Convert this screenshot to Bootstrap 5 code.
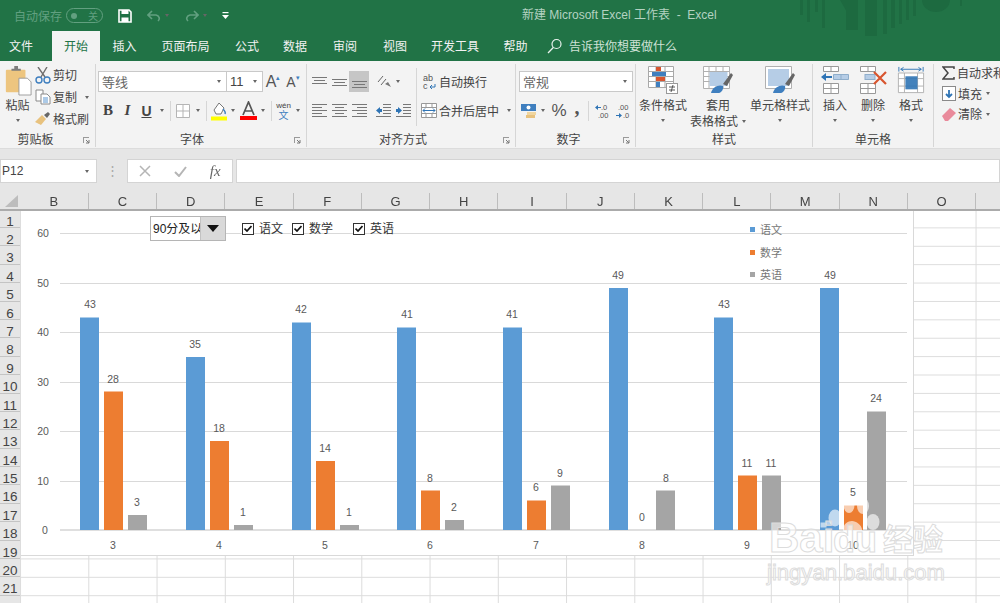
<!DOCTYPE html>
<html lang="zh">
<head>
<meta charset="utf-8">
<title>Excel</title>
<link href="https://cdn.jsdelivr.net/npm/bootstrap@5.3.0/dist/css/bootstrap.min.css" rel="stylesheet">
<style>
html,body{width:1000px;height:603px;overflow:hidden;background:#e6e6e6}
body{font-family:"Noto Sans CJK SC","Liberation Sans",sans-serif;font-size:12px;color:#444;line-height:1}
svg{display:block;flex:none}
.xl-app{width:1000px;height:603px;overflow:hidden;filter:blur(.3px)}
.xl-title{height:31px;background:#217346}
.xl-deco{position:absolute;left:800px;top:0}
.xl-auto{margin-left:14px;width:52px;color:#62a080}
.xl-toggle{width:37px;height:15px;border:1px solid #62a080;border-radius:8px;color:#62a080;font-size:10px;padding:0 4px}
.xl-dot{width:6px;height:6px;border-radius:50%;background:#62a080}
.xl-doc{position:absolute;left:522px;top:8px;color:#b4d2c1;font-family:"Liberation Sans","Noto Sans CJK SC",sans-serif;font-size:12px;line-height:14px}
.xl-qat{margin-left:15px}
.xl-undo{border-top-color:#62a080}
.xl-tabs{height:30px;background:#217346;color:#f2f2f2}
.xl-tab{height:30px;line-height:29px;text-align:center;flex:none}
.xl-tab.is-on{background:#f3f3f3;color:#217346;margin-left:10px}
.xl-t42{width:42px}.xl-t46{width:46px}.xl-t47{width:47px}.xl-t48{width:48px}.xl-t49{width:49px}.xl-t50{width:50px}.xl-t54{width:54px}.xl-t73{width:73px}.xl-t74{width:74px}
.xl-tell{color:#cfe2d7;margin-left:7px}
.xl-ribbon{height:87px;background:#f3f3f3;padding-top:3px}
.xl-grp{height:83px;border-right:1px solid #d6d6d6;position:relative;flex:none}
.xl-body{padding-top:7px}
.xl-cap{position:absolute;left:0;right:0;bottom:0;height:16px;line-height:16px;text-align:center;color:#444}
.xl-cap1{padding-right:24px}.xl-cap2{padding-right:18px}.xl-cap3{padding-right:16px}.xl-cap4{padding-right:14px}
.xl-launch{position:absolute;right:5px;bottom:3px}
.xl-rw{height:21px}
.xl-rw+.xl-rw{margin-top:8px}
.xl-cell{height:21px;flex:none;display:flex;align-items:center;justify-content:center}
.xl-cell.is-on{background:#c6c6c6}
.xl-sep{width:1px;height:20px;background:#d6d6d6;margin:0 2px}
.xl-vsep{display:block;width:1px;height:58px;background:#d6d6d6;margin-top:-3px}
.xl-caret{width:0;height:0;border:2.5px solid transparent;border-top:3px solid #666;border-bottom:0;display:block;flex:none}
.xl-drop{height:21px;background:#fff;border:1px solid #c9c9c9;flex:none;padding:0 5px 0 3px;color:#666;font-size:13px}
.xl-d129{width:129px}.xl-d37{width:37px;margin-left:-1px}.xl-d114{width:114px}
.xl-num{font-family:"Liberation Sans",sans-serif;color:#444}
.xl-g1{width:96px}.xl-g2{width:211px}.xl-g3{width:209px}.xl-g4{width:120px}.xl-g5{width:177px}.xl-g6{width:121px}.xl-g7{width:66px;border-right:0;overflow:hidden}
.xl-smallrow{height:22px}
.xl-editrows{margin-top:-1px}
.xl-editrow{height:20.500px;white-space:nowrap}
.xl-stack{width:35px}
.xl-paste{margin-top:2px;height:30px}
.xl-pastetxt{margin-top:3px}
.xl-pastecaret{margin-top:8px}
.xl-ml2{margin-left:2px}
.xl-big{flex:none;text-align:center}
.xl-bigrow{padding-top:2px}
.xl-bigtxt{line-height:16px;margin-top:3px;white-space:nowrap}
.xl-bigtxt2{margin-top:0}
.xl-bigic{height:28px;display:flex;justify-content:center}
.xl-bigcaret{margin:6px auto 0}
.xl-w4{width:4px}.xl-w6{width:6px}.xl-w9{width:9px}.xl-w10{width:10px}.xl-w11{width:11px}.xl-w14{width:14px}.xl-w19{width:19px}.xl-w20{width:20px}.xl-w22{width:22px}.xl-w38{width:38px}.xl-w54{width:54px}.xl-w56{width:56px}.xl-w60{width:60px}
.xl-pl2{padding-left:2px}.xl-pl3{padding-left:3px}
.xl-left{width:107px}
.xl-bold{font-family:"Liberation Serif",serif;font-size:15px;color:#444;font-weight:700}
.xl-ital{font-family:"Liberation Serif",serif;font-style:italic;font-size:15px;font-weight:700}
.xl-under{font-family:"Liberation Sans",sans-serif;font-size:14px;text-decoration:underline;font-weight:700}
.xl-bigA{font-family:"Liberation Sans",sans-serif;font-size:16px;color:#555}
.xl-smA{font-family:"Liberation Sans",sans-serif;font-size:14px;color:#555}
.xl-bigA sup,.xl-smA sup{color:#3f7fbf;font-size:7px}
.xl-wen{font-size:8px;font-family:"Liberation Sans",sans-serif}
.xl-wenz{font-size:10px;color:#3f7fbf}
.xl-pct{font-family:"Liberation Sans",sans-serif;font-size:17px;color:#555}
.xl-comma{font-family:"Liberation Serif",serif;font-size:20px;font-weight:700;color:#555;line-height:10px;padding-bottom:7px}
.xl-gap{height:10px;background:#e6e6e6;border-top:1px solid #dcdcdc}
.xl-fbar{height:25px;background:#e6e6e6;padding-top:1px}
.xl-name{width:97px;height:24px;background:#fff;border:1px solid #d4d4d4;padding:0 7px 0 1px;font-family:"Liberation Sans",sans-serif;font-size:12px;color:#444}
.xl-dots{width:30px;text-align:center;color:#a8a8a8;font-size:13px;padding-top:4px}
.xl-fx{width:106px;height:24px;background:#fff;border:1px solid #d4d4d4;color:#b5b5b5}
.xl-fxi{font-family:"Liberation Serif",serif;font-style:italic;color:#666;font-size:15px}
.xl-input{height:24px;background:#fff;border:1px solid #d4d4d4;margin-left:3px;flex:1}
.xl-colbar{height:26px;background:#e6e6e6;padding-top:10px}
.xl-corner{width:19.700px;height:16px;flex:none;position:relative}
.xl-col{width:68.250px;height:16px;flex:none;text-align:center;font-family:"Liberation Sans",sans-serif;font-size:13px;line-height:18px;color:#444;border-left:1px solid #bdbdbd}
.xl-col0{border-left:0}
.xl-line{height:2px;background:#ababab}
.xl-sheet{position:relative;height:392px;background:#fff;overflow:hidden}
.xl-rows{width:20px;background:#e6e6e6;flex:none;margin-top:-1.400px;height:394px}
.xl-rownum{height:18.400px;font-family:"Liberation Sans",sans-serif;font-size:13.500px;line-height:24px;text-align:center;border-bottom:1px solid #c4c4c4;color:#444}
.xl-grid{flex:1;background-color:#fff;background-image:linear-gradient(to right,#dcdcdc 1px,transparent 1px),linear-gradient(to bottom,#dcdcdc 1px,transparent 1px);background-size:68.250px 100%,100% 18.400px;background-position:68.300px 0,0 16.400px}
.xl-chart{position:absolute;left:21px;top:-1px;width:893px;height:346px;background:#fff;border:1px solid #d9d9d9;border-left:0}
.xl-ctl{position:absolute;left:129px;top:5px;color:#333}
.xl-combo{width:76px;height:25px;border:1px solid #b5b5b5;background:#fff;font-size:12px;color:#222}
.xl-combotxt{width:50px;overflow:hidden;white-space:nowrap;padding-left:2px;font-family:"Liberation Sans","Noto Sans CJK SC",sans-serif}
.xl-combobtn{width:25px;height:23px;background:#d9d9d9;border-left:1px solid #c2c2c2}
.xl-tri{width:0;height:0;border:6px solid transparent;border-top:7px solid #111;border-bottom:0}
.xl-box{width:12px;height:12px;border:1px solid #333;flex:none;background:#fff}
.xl-chk{color:#333;height:25px;flex:none}
.xl-chk1{margin-left:16px;width:50px}.xl-chk2{width:61px}.xl-chk3{width:50px}
.xl-chktxt{margin-left:5px;line-height:1;white-space:nowrap;padding-bottom:2px}
.xl-wm{position:absolute;left:740px;top:279px;pointer-events:none}
</style>
</head>
<body>
<div class="xl-app d-flex flex-column position-relative">
  <!-- title bar -->
  <div class="xl-title d-flex align-items-center position-relative flex-shrink-0">
    <svg class="xl-deco" width="200" height="36" viewBox="0 0 200 36" fill="#1d6a40"><rect x="0" y="0" width="3" height="15"/><rect x="7" y="0" width="3" height="22"/><rect x="15" y="0" width="3" height="12"/><rect x="22" y="0" width="3" height="28"/><path d="M30 0h10l8 14v-14h0z"/><rect x="46" y="0" width="12" height="30"/><rect x="65" y="0" width="12" height="36"/><rect x="83" y="0" width="4" height="34"/><rect x="91" y="0" width="4" height="28"/><rect x="99" y="0" width="3" height="24"/><rect x="106" y="0" width="3" height="20"/><rect x="113" y="0" width="3" height="16"/><path d="M122 0h28a14 12 0 0 1-28 0z"/><rect x="160" y="0" width="2" height="6"/></svg>
    <span class="xl-auto">自动保存</span>
    <span class="xl-toggle d-flex align-items-center justify-content-between flex-shrink-0"><i class="xl-dot"></i><span>关</span></span>
    <svg class="xl-qat" width="14" height="14" viewBox="0 0 14 14"><path d="M1 1h10l2 2v10H1z" fill="none" stroke="#fff" stroke-width="1.600"/><rect x="3.500" y="1" width="7" height="4" fill="#fff"/><rect x="3.500" y="8.500" width="7" height="4.500" fill="#fff"/></svg>
    <svg class="xl-qat" width="14" height="12" viewBox="0 0 14 12"><path d="M5 1 1 5l4 4M1 5h8a4 3.500 0 0 1 2 6" fill="none" stroke="#62a080" stroke-width="1.600"/></svg>
    <i class="xl-caret xl-undo ms-1"></i>
    <svg class="ms-3" width="14" height="12" viewBox="0 0 14 12"><path d="M9 1l4 4-4 4M13 5H5a4 3.500 0 0 0-2 6" fill="none" stroke="#62a080" stroke-width="1.600"/></svg>
    <i class="xl-caret xl-undo ms-1"></i>
    <svg class="xl-qat" width="7" height="7" viewBox="0 0 7 7"><rect x="0.500" y="0" width="6" height="1.200" fill="#fff"/><path d="M0 3h7L3.500 7z" fill="#fff"/></svg>
    <span class="xl-doc">新建 Microsoft Excel 工作表&nbsp; -&nbsp; Excel</span>
  </div>
  <!-- tabs -->
  <nav class="xl-tabs d-flex align-items-center flex-shrink-0">
    <span class="xl-tab xl-t42">文件</span>
    <span class="xl-tab is-on xl-t48">开始</span>
    <span class="xl-tab xl-t49">插入</span>
    <span class="xl-tab xl-t73">页面布局</span>
    <span class="xl-tab xl-t50">公式</span>
    <span class="xl-tab xl-t46">数据</span>
    <span class="xl-tab xl-t54">审阅</span>
    <span class="xl-tab xl-t46">视图</span>
    <span class="xl-tab xl-t74">开发工具</span>
    <span class="xl-tab xl-t47">帮助</span>
    <svg class="ms-2" width="15" height="16" viewBox="0 0 15 16"><circle cx="9.500" cy="6" r="4.500" fill="none" stroke="#eaf3ee" stroke-width="1.200"/><path d="M6.300 9.500 1 15" stroke="#eaf3ee" stroke-width="1.300"/></svg>
    <span class="xl-tell">告诉我你想要做什么</span>
  </nav>
  <!-- ribbon -->
  <div class="xl-ribbon d-flex flex-shrink-0">
    <!-- clipboard -->
    <section class="xl-grp xl-g1">
      <div class="d-flex">
        <div class="xl-stack d-flex flex-column align-items-center">
          <svg class="xl-paste" width="28" height="30" viewBox="0 0 30 32"><rect x="2" y="4" width="21" height="24" rx="1" fill="#edc57f"/><path d="M8 5V3h3V0h4v3h3v2z" fill="#7d7d7d"/><path d="M16 13h9l4 4v14H16z" fill="#fff" stroke="#9a9a9a"/></svg>
          <span class="xl-pastetxt">粘贴</span>
          <i class="xl-caret xl-pastecaret"></i>
        </div>
        <div class="d-flex flex-column">
          <div class="xl-smallrow d-flex align-items-center"><svg width="16" height="17" viewBox="0 0 16 17"><path d="M3 0 10 10M12 0 6 10" stroke="#6e6e6e" stroke-width="1.400"/><circle cx="4" cy="13" r="3" fill="none" stroke="#3f7fbf" stroke-width="1.400"/><circle cx="12" cy="13" r="3" fill="none" stroke="#3f7fbf" stroke-width="1.400"/></svg><span class="xl-ml2">剪切</span></div>
          <div class="xl-smallrow d-flex align-items-center"><svg width="16" height="16" viewBox="0 0 16 16"><path d="M1 1h7v11H1z" fill="#fff" stroke="#8a8a8a"/><path d="M6 5h6l3 3v7H6z" fill="#fff" stroke="#8a8a8a"/><path d="M8 9h5M8 11h5M8 13h5" stroke="#5a95cf"/></svg><span class="xl-ml2">复制</span><i class="xl-caret ms-2"></i></div>
          <div class="xl-smallrow d-flex align-items-center"><svg width="16" height="14" viewBox="0 0 16 14"><path d="M0 10 7 3l4 4-5 6z" fill="#e8c27e"/><path d="M9 3l4-3 2 2-3 4z" fill="#666"/></svg><span class="xl-ml2">格式刷</span></div>
        </div>
      </div>
      <div class="xl-cap xl-cap1">剪贴板</div>
      <svg class="xl-launch" width="7" height="7" viewBox="0 0 7 7"><path d="M0 .5h6M.5 0v6" stroke="#9a9a9a"/><path d="M3 3l3 3M6 3v3H3" stroke="#777" fill="none"/></svg>
    </section>
    <!-- font -->
    <section class="xl-grp xl-g2">
      <div class="xl-body xl-pl2">
        <div class="xl-rw d-flex align-items-center">
          <div class="xl-drop xl-d129 d-flex align-items-center justify-content-between"><span>等线</span><i class="xl-caret"></i></div>
          <div class="xl-drop xl-d37 d-flex align-items-center justify-content-between"><span class="xl-num">11</span><i class="xl-caret"></i></div>
          <span class="xl-cell xl-w20 xl-bigA">A<sup>▴</sup></span>
          <span class="xl-cell xl-w20 xl-smA">A<sup>▾</sup></span>
        </div>
        <div class="xl-rw d-flex align-items-center">
          <span class="xl-cell xl-w20 xl-bold">B</span><span class="xl-cell xl-w19 xl-ital">I</span><span class="xl-cell xl-w19 xl-under">U</span><span class="xl-cell xl-w11"><i class="xl-caret"></i></span>
          <span class="xl-cell xl-w6"><i class="xl-sep"></i></span>
          <span class="xl-cell xl-w20"><svg width="14" height="14" viewBox="0 0 14 14"><path d="M.5.500h13v13H.5zM7 .5v13M.5 7h13" fill="#fff" stroke="#b5b5b5"/></svg></span><span class="xl-cell xl-w10"><i class="xl-caret"></i></span>
          <span class="xl-cell xl-w6"><i class="xl-sep"></i></span>
          <span class="xl-cell xl-w19"><svg width="16" height="20" viewBox="0 0 16 20"><path d="M3 9 8 2l5 5-3 6H5z" fill="#fff" stroke="#777"/><path d="M12 8c2 2 3 3 2 5" stroke="#3f7fbf" fill="none" stroke-width="1.500"/><rect y="15.500" width="16" height="4" fill="#ffff00"/></svg></span><span class="xl-cell xl-w10"><i class="xl-caret"></i></span>
          <span class="xl-cell xl-w20"><svg width="17" height="19" viewBox="0 0 17 19"><path d="M3 14 8.500 1 14 14M5 10h7" fill="none" stroke="#555" stroke-width="1.700"/><rect y="15" width="17" height="4" fill="#f00"/></svg></span><span class="xl-cell xl-w10"><i class="xl-caret"></i></span>
          <span class="xl-cell xl-w6"><i class="xl-sep"></i></span>
          <span class="xl-cell xl-w19 flex-column"><span class="xl-wen">wén</span><span class="xl-wenz">文</span></span><span class="xl-cell xl-w10"><i class="xl-caret"></i></span>
        </div>
      </div>
      <div class="xl-cap xl-cap2">字体</div>
      <svg class="xl-launch" width="7" height="7" viewBox="0 0 7 7"><path d="M0 .5h6M.5 0v6" stroke="#9a9a9a"/><path d="M3 3l3 3M6 3v3H3" stroke="#777" fill="none"/></svg>
    </section>
    <!-- align -->
    <section class="xl-grp xl-g3">
      <div class="xl-body d-flex xl-pl2">
        <div class="xl-left">
          <div class="xl-rw d-flex align-items-center">
            <span class="xl-cell xl-w20"><svg width="15" height="10" viewBox="0 0 15 10"><path d="M0 .5h15M2 3.500h11M0 6.500h15" stroke="#777"/></svg></span>
            <span class="xl-cell xl-w20"><svg width="15" height="10" viewBox="0 0 15 10"><path d="M0 2.500h15M2 5.500h11M0 8.500h15" stroke="#777"/></svg></span>
            <span class="xl-cell xl-w20 is-on"><svg width="15" height="14" viewBox="0 0 15 14"><path d="M0 6.500h15M2 9.500h11M0 12.500h15" stroke="#777"/></svg></span>
            <span class="xl-cell xl-w4"></span>
            <span class="xl-cell xl-w20"><svg width="15" height="13" viewBox="0 0 15 13"><path d="M2 7 7 1M5 10 10 4" stroke="#666" fill="none"/><path d="M9 9l6 3-3-5z" fill="#777"/></svg></span><span class="xl-cell xl-w10"><i class="xl-caret"></i></span>
          </div>
          <div class="xl-rw d-flex align-items-center">
            <span class="xl-cell xl-w20"><svg width="15" height="13" viewBox="0 0 15 13"><path d="M0 .5h15M0 3.500h10M0 6.500h15M0 9.500h10M0 12.500h15" stroke="#777"/></svg></span>
            <span class="xl-cell xl-w20"><svg width="15" height="13" viewBox="0 0 15 13"><path d="M0 .5h15M3 3.500h9M0 6.500h15M3 9.500h9M0 12.500h15" stroke="#777"/></svg></span>
            <span class="xl-cell xl-w20"><svg width="15" height="13" viewBox="0 0 15 13"><path d="M0 .5h15M5 3.500h10M0 6.500h15M5 9.500h10M0 12.500h15" stroke="#777"/></svg></span>
            <span class="xl-cell xl-w4"></span>
            <span class="xl-cell xl-w20"><svg width="15" height="13" viewBox="0 0 15 13"><path d="M7 .5h8M7 3.500h8M7 6.500h8M7 9.500h8M0 12.500h15" stroke="#777"/><path d="M0 6.500 4 3v2h2v3H4v2z" fill="#2f74b5"/></svg></span>
            <span class="xl-cell xl-w20"><svg width="15" height="13" viewBox="0 0 15 13"><path d="M7 .5h8M7 3.500h8M7 6.500h8M7 9.500h8M0 12.500h15" stroke="#777"/><path d="M6 6.500 2 3v2H0v3h2v2z" fill="#2f74b5"/></svg></span>
          </div>
        </div>
        <i class="xl-vsep"></i>
        <div class="flex-grow-1">
          <div class="xl-rw d-flex align-items-center"><span class="xl-cell xl-w20 xl-ml2"><svg width="15" height="16" viewBox="0 0 15 16"><text x="1" y="7" font-size="9" font-family="Liberation Sans" fill="#555">ab</text><text x="1" y="15" font-size="9" font-family="Liberation Sans" fill="#555">c</text><path d="M13 10v3H8l2-2M8 13l2 2" stroke="#2f74b5" fill="none"/></svg></span><span>自动换行</span></div>
          <div class="xl-rw d-flex align-items-center"><span class="xl-cell xl-w20 xl-ml2"><svg width="16" height="15" viewBox="0 0 16 15"><path d="M.5.500h15v14H.5zM.5 4.500h15M.5 10.500h15M5 .5v4M11 .5v4M5 10.500v4M11 10.500v4" fill="#fff" stroke="#999"/><path d="M2 7.500h12M2 7.500l2-2M2 7.500l2 2M14 7.500l-2-2M14 7.500l-2 2" stroke="#2f74b5" fill="none"/></svg></span><span>合并后居中</span><i class="xl-caret ms-2"></i></div>
        </div>
      </div>
      <div class="xl-cap xl-cap3">对齐方式</div>
      <svg class="xl-launch" width="7" height="7" viewBox="0 0 7 7"><path d="M0 .5h6M.5 0v6" stroke="#9a9a9a"/><path d="M3 3l3 3M6 3v3H3" stroke="#777" fill="none"/></svg>
    </section>
    <!-- number -->
    <section class="xl-grp xl-g4">
      <div class="xl-body xl-pl3">
        <div class="xl-rw d-flex"><div class="xl-drop xl-d114 d-flex align-items-center justify-content-between"><span>常规</span><i class="xl-caret"></i></div></div>
        <div class="xl-rw d-flex align-items-center">
          <span class="xl-cell xl-w19"><svg width="16" height="16" viewBox="0 0 16 16"><rect y="1" width="15" height="7" fill="#3f7fbf"/><circle cx="7.500" cy="4.500" r="2" fill="#fff"/><rect x="6" y="9" width="9" height="3" fill="#f0d6a0"/><rect x="5" y="12" width="9" height="3" fill="#e8c27e"/></svg></span>
          <span class="xl-cell xl-w10"><i class="xl-caret"></i></span>
          <span class="xl-cell xl-w22 xl-pct">%</span>
          <span class="xl-cell xl-w14 xl-comma">,</span>
          <span class="xl-cell xl-w9"><i class="xl-sep"></i></span>
          <span class="xl-cell xl-w20"><svg width="16" height="16" viewBox="0 0 16 16"><text x="6" y="7" font-size="7.500" font-family="Liberation Sans" fill="#555">.0</text><text x="3" y="15" font-size="7.500" font-family="Liberation Sans" fill="#555">.00</text><path d="M0 4.500 3 2v2h3v1H3v2z" fill="#2f74b5"/></svg></span>
          <span class="xl-cell xl-w20"><svg width="16" height="16" viewBox="0 0 16 16"><text x="3" y="7" font-size="7.500" font-family="Liberation Sans" fill="#555">.00</text><text x="8" y="15" font-size="7.500" font-family="Liberation Sans" fill="#555">.0</text><path d="M7 12.500 4 10v2H1v1h3v2z" fill="#2f74b5"/></svg></span>
        </div>
      </div>
      <div class="xl-cap xl-cap4">数字</div>
      <svg class="xl-launch" width="7" height="7" viewBox="0 0 7 7"><path d="M0 .5h6M.5 0v6" stroke="#9a9a9a"/><path d="M3 3l3 3M6 3v3H3" stroke="#777" fill="none"/></svg>
    </section>
    <!-- styles -->
    <section class="xl-grp xl-g5">
      <div class="d-flex xl-bigrow">
        <div class="xl-big xl-w54">
          <div class="xl-bigic"><svg width="30" height="28" viewBox="0 0 30 28"><path d="M.5 .5h25v21H.5zM.5 5.500h25M.5 10.500h25M.5 15.500h25M8 .5v21M17 .5v21" fill="#fff" stroke="#a8a8a8"/><rect x="8" y="1" width="5" height="4" fill="#d8552f"/><rect x="4" y="6" width="14" height="4" fill="#3f7fbf"/><rect x="8" y="11" width="9" height="4" fill="#d8552f"/><rect x="8" y="16" width="4" height="5" fill="#3f7fbf"/><rect x="18.500" y="17.500" width="11" height="10" fill="#fff" stroke="#999"/><path d="M21 21h6M21 24h6M25 19l-2 7" stroke="#555"/></svg></div>
          <div class="xl-bigtxt">条件格式</div><i class="xl-caret xl-bigcaret"></i>
        </div>
        <div class="xl-big xl-w56">
          <div class="xl-bigic"><svg width="30" height="28" viewBox="0 0 30 28"><path d="M.5 .5h26v22H.5zM.5 5.500h26M.5 10.500h26M.5 15.500h26M6 .5v22M13 .5v22M20 .5v22" fill="#fff" stroke="#b0b0b0"/><rect x="6.500" y="6" width="18" height="14" fill="#b6cde6"/><path d="M20 18 28 7l2 2-6 11z" fill="#666"/><path d="M8 27c1-6 8-9 12-7 1 3-2 7-4 7z" fill="#3f7fbf"/></svg></div>
          <div class="xl-bigtxt">套用</div><div class="xl-bigtxt xl-bigtxt2 d-flex align-items-center justify-content-center">表格格式<i class="xl-caret ms-1"></i></div>
        </div>
        <div class="xl-big xl-w60 ms-1">
          <div class="xl-bigic"><svg width="30" height="28" viewBox="0 0 30 28"><path d="M.5 .5h26v22H.5z" fill="#fff" stroke="#b0b0b0"/><rect x="3" y="3" width="21" height="17" fill="#b6cde6"/><path d="M20 18 28 7l2 2-6 11z" fill="#666"/><path d="M8 27c1-6 8-9 12-7 1 3-2 7-4 7z" fill="#3f7fbf"/></svg></div>
          <div class="xl-bigtxt">单元格样式</div><i class="xl-caret xl-bigcaret"></i>
        </div>
      </div>
      <div class="xl-cap">样式</div>
    </section>
    <!-- cells -->
    <section class="xl-grp xl-g6">
      <div class="d-flex xl-bigrow xl-pl3">
        <div class="xl-big xl-w38">
          <div class="xl-bigic"><svg width="28" height="28" viewBox="0 0 28 28"><path d="M2.500 .5h15v5h-15zM10 .5v5M2.500 17.500h15v10h-15zM2.500 22.500h15M10 17.500v10" fill="#fff" stroke="#999"/><path d="M12.500 8.500h15v5h-15zM20 8.500v5" fill="#b6cde6" stroke="#8faecb"/><path d="M0 11 5 7v3h6v2H5v3z" fill="#2f74b5"/></svg></div>
          <div class="xl-bigtxt">插入</div><i class="xl-caret xl-bigcaret"></i>
        </div>
        <div class="xl-big xl-w38">
          <div class="xl-bigic"><svg width="30" height="28" viewBox="0 0 30 28"><path d="M2.500 .5h15v5h-15zM10 .5v5M2.500 17.500h15v10h-15zM2.500 22.500h15M10 17.500v10" fill="#fff" stroke="#999"/><rect x="7" y="8.500" width="10" height="5" fill="#b6cde6" stroke="#8faecb"/><path d="M16 6l12 12M28 6 16 18" stroke="#d8552f" stroke-width="2.200"/></svg></div>
          <div class="xl-bigtxt">删除</div><i class="xl-caret xl-bigcaret"></i>
        </div>
        <div class="xl-big xl-w38">
          <div class="xl-bigic"><svg width="28" height="28" viewBox="0 0 28 30"><path d="M1 1v5M27 1v5M3 3.500h22M3 3.500l3-2M3 3.500l3 2M25 3.500l-3-2M25 3.500l-3 2" stroke="#2f74b5" fill="none"/><path d="M.5 7.500h27v21H.5zM.5 13.500h27M.5 21.500h27M7 7.500v21M21 7.500v21" fill="#fff" stroke="#b0b0b0"/><rect x="8" y="11" width="13" height="14" fill="#2f74b5" opacity=".9"/></svg></div>
          <div class="xl-bigtxt">格式</div><i class="xl-caret xl-bigcaret"></i>
        </div>
      </div>
      <div class="xl-cap">单元格</div>
    </section>
    <!-- editing -->
    <section class="xl-grp xl-g7">
      <div class="d-flex flex-column ps-2 xl-editrows">
        <div class="d-flex align-items-center xl-editrow"><svg width="13" height="14" viewBox="0 0 13 14"><path d="M12 3V1H1l5 6-5 6h11v-2" fill="none" stroke="#444" stroke-width="1.500"/></svg><span class="xl-ml2">自动求和</span></div>
        <div class="d-flex align-items-center xl-editrow"><svg width="14" height="15" viewBox="0 0 14 15"><rect x=".5" y=".5" width="13" height="14" fill="#fff" stroke="#8a8a8a"/><path d="M7 4v7M4 8l3 3 3-3" fill="none" stroke="#2f74b5" stroke-width="1.800"/></svg><span class="xl-ml2">填充</span><i class="xl-caret ms-1"></i></div>
        <div class="d-flex align-items-center xl-editrow"><svg width="14" height="14" viewBox="0 0 14 14"><path d="M0 9 8 1l6 5-8 8H3z" fill="#e98a9b"/></svg><span class="xl-ml2">清除</span><i class="xl-caret ms-1"></i></div>
      </div>
    </section>
  </div>
  <div class="xl-gap flex-shrink-0"></div>
  <!-- formula bar -->
  <div class="xl-fbar d-flex align-items-start flex-shrink-0">
    <div class="xl-name d-flex align-items-center justify-content-between flex-shrink-0"><span>P12</span><i class="xl-caret"></i></div>
    <div class="xl-dots flex-shrink-0">⋮</div>
    <div class="xl-fx d-flex align-items-center justify-content-around flex-shrink-0">
      <svg width="12" height="12" viewBox="0 0 12 12"><path d="M1 1l10 10M11 1 1 11" stroke="#b5b5b5" stroke-width="1.500"/></svg>
      <svg width="13" height="11" viewBox="0 0 13 11"><path d="M1 6l4 4 7-9" fill="none" stroke="#b5b5b5" stroke-width="2"/></svg>
      <span class="xl-fxi">fx</span>
    </div>
    <div class="xl-input"></div>
  </div>
  <!-- column headers -->
  <div class="xl-colbar d-flex flex-shrink-0">
    <div class="xl-corner"><svg width="20" height="16" viewBox="0 0 20 16"><path d="M18 2v12H5z" fill="#bdbdbd"/></svg></div>
    <div class="xl-col xl-col0">B</div><div class="xl-col">C</div><div class="xl-col">D</div><div class="xl-col">E</div><div class="xl-col">F</div><div class="xl-col">G</div><div class="xl-col">H</div><div class="xl-col">I</div><div class="xl-col">J</div><div class="xl-col">K</div><div class="xl-col">L</div><div class="xl-col">M</div><div class="xl-col">N</div><div class="xl-col">O</div><div class="xl-col"></div>
  </div>
  <div class="xl-line flex-shrink-0"></div>
  <!-- sheet -->
  <div class="xl-sheet d-flex flex-shrink-0">
    <div class="xl-rows">
      <div class="xl-rownum">1</div><div class="xl-rownum">2</div><div class="xl-rownum">3</div><div class="xl-rownum">4</div><div class="xl-rownum">5</div><div class="xl-rownum">6</div><div class="xl-rownum">7</div><div class="xl-rownum">8</div><div class="xl-rownum">9</div><div class="xl-rownum">10</div><div class="xl-rownum">11</div><div class="xl-rownum">12</div><div class="xl-rownum">13</div><div class="xl-rownum">14</div><div class="xl-rownum">15</div><div class="xl-rownum">16</div><div class="xl-rownum">17</div><div class="xl-rownum">18</div><div class="xl-rownum">19</div><div class="xl-rownum">20</div><div class="xl-rownum">21</div>
    </div>
    <div class="xl-grid"></div>
    <!-- chart -->
    <div class="xl-chart">
      <svg width="893" height="345" viewBox="21 211 893 345" font-family="Liberation Sans, sans-serif" font-size="10.500" fill="#595959">
        <g stroke="#d9d9d9"><path d="M60 233.500h847M60 283.500h847M60 332.500h847M60 382.500h847M60 431.500h847M60 481.500h847"/><path d="M60 530h847" stroke="#bfbfbf"/></g>
        <g text-anchor="middle"><text x="43" y="237">60</text><text x="43" y="287">50</text><text x="43" y="336">40</text><text x="43" y="386">30</text><text x="43" y="435">20</text><text x="43" y="485">10</text><text x="45" y="534">0</text></g>
        <g fill="#5b9bd5"><rect x="80" y="317.500" width="19" height="212.500"/><rect x="186" y="357" width="19" height="173"/><rect x="292" y="322.500" width="19" height="207.500"/><rect x="397" y="327.500" width="19" height="202.500"/><rect x="503" y="327.500" width="19" height="202.500"/><rect x="609" y="288" width="19" height="242"/><rect x="714" y="317.500" width="19" height="212.500"/><rect x="820" y="288" width="19" height="242"/></g>
        <g fill="#ed7d31"><rect x="104" y="391.500" width="19" height="138.500"/><rect x="210" y="441" width="19" height="89"/><rect x="316" y="461" width="19" height="69"/><rect x="421" y="490.500" width="19" height="39.500"/><rect x="527" y="500.500" width="19" height="29.500"/><rect x="738" y="475.500" width="19" height="54.500"/><rect x="844" y="505.500" width="19" height="24.500"/></g>
        <g fill="#a5a5a5"><rect x="128" y="515" width="19" height="15"/><rect x="234" y="525" width="19" height="5"/><rect x="340" y="525" width="19" height="5"/><rect x="445" y="520" width="19" height="10"/><rect x="551" y="485.500" width="19" height="44.500"/><rect x="656" y="490.500" width="19" height="39.500"/><rect x="762" y="475.500" width="19" height="54.500"/><rect x="867" y="411.500" width="19" height="118.500"/></g>
        <g text-anchor="middle">
          <text x="90" y="308">43</text><text x="195" y="348">35</text><text x="301" y="313">42</text><text x="407" y="318">41</text><text x="512" y="318">41</text><text x="618" y="279">49</text><text x="724" y="308">43</text><text x="830" y="279">49</text>
          <text x="113" y="383">28</text><text x="219" y="432">18</text><text x="325" y="452">14</text><text x="430" y="482">8</text><text x="536" y="491">6</text><text x="642" y="521">0</text><text x="747" y="467">11</text><text x="853" y="496">5</text>
          <text x="137" y="506">3</text><text x="243" y="516">1</text><text x="349" y="516">1</text><text x="454" y="511">2</text><text x="560" y="477">9</text><text x="666" y="482">8</text><text x="771" y="467">11</text><text x="876" y="402">24</text>
        </g>
        <g text-anchor="middle"><text x="113" y="549">3</text><text x="219" y="549">4</text><text x="325" y="549">5</text><text x="430" y="549">6</text><text x="536" y="549">7</text><text x="642" y="549">8</text><text x="747" y="549">9</text><text x="853" y="549">10</text></g>
        <rect x="750" y="227" width="5" height="5" fill="#5b9bd5"/><rect x="750" y="250" width="5" height="5" fill="#ed7d31"/><rect x="750" y="272" width="5" height="5" fill="#a5a5a5"/>
        <g font-family="Noto Sans CJK SC, sans-serif" font-size="11" fill="#777"><text x="760" y="234">语文</text><text x="760" y="257">数学</text><text x="760" y="279">英语</text></g>
      </svg>
      <div class="xl-ctl d-flex align-items-center">
        <div class="xl-combo d-flex align-items-center flex-shrink-0"><span class="xl-combotxt">90分及以上</span><span class="xl-combobtn d-flex align-items-center justify-content-center"><i class="xl-tri"></i></span></div>
        <div class="xl-chk xl-chk1 d-flex align-items-center"><span class="xl-box d-flex align-items-center justify-content-center"><svg width="8" height="7" viewBox="0 0 8 7"><path d="M.5 3.500 3 6 7.500 1" fill="none" stroke="#111" stroke-width="1.700"/></svg></span><span class="xl-chktxt">语文</span></div>
        <div class="xl-chk xl-chk2 d-flex align-items-center"><span class="xl-box d-flex align-items-center justify-content-center"><svg width="8" height="7" viewBox="0 0 8 7"><path d="M.5 3.500 3 6 7.500 1" fill="none" stroke="#111" stroke-width="1.700"/></svg></span><span class="xl-chktxt">数学</span></div>
        <div class="xl-chk xl-chk3 d-flex align-items-center"><span class="xl-box d-flex align-items-center justify-content-center"><svg width="8" height="7" viewBox="0 0 8 7"><path d="M.5 3.500 3 6 7.500 1" fill="none" stroke="#111" stroke-width="1.700"/></svg></span><span class="xl-chktxt">英语</span></div>
      </div>
    </div>
    <!-- watermark -->
    <svg class="xl-wm" width="220" height="100" viewBox="740 490 220 100">
      <g fill="#fff" fill-opacity=".62">
        <ellipse cx="835" cy="518" rx="6.500" ry="8.500"/><ellipse cx="849" cy="505" rx="5.500" ry="8"/><ellipse cx="863" cy="506" rx="6" ry="8"/><ellipse cx="873" cy="522" rx="6.500" ry="8"/><path d="M843 530c0-6 5-9 9-9s10 4 10 9c0 6-5 8-10 8s-9-2-9-8z"/><rect x="820.500" y="522.500" width="6" height="5"/>
      </g>
      <g fill="#fff" fill-opacity=".55" stroke="#dcdcdc" stroke-width="1">
        <text x="769" y="552" font-family="Liberation Sans, sans-serif" font-weight="700" font-size="42">Bai</text>
        <text x="833" y="552" font-family="Liberation Sans, sans-serif" font-weight="700" font-size="36" textLength="44" lengthAdjust="spacingAndGlyphs">du</text>
        <text x="883" y="550" font-family="Noto Sans CJK SC, sans-serif" font-weight="700" font-size="30">经验</text>
        <text x="767" y="580" font-family="Liberation Sans, sans-serif" font-size="22" textLength="178" lengthAdjust="spacingAndGlyphs">jingyan.baidu.com</text>
      </g>
    </svg>
  </div>
</div>
<script src="https://cdn.jsdelivr.net/npm/bootstrap@5.3.0/dist/js/bootstrap.bundle.min.js"></script>
</body>
</html>
